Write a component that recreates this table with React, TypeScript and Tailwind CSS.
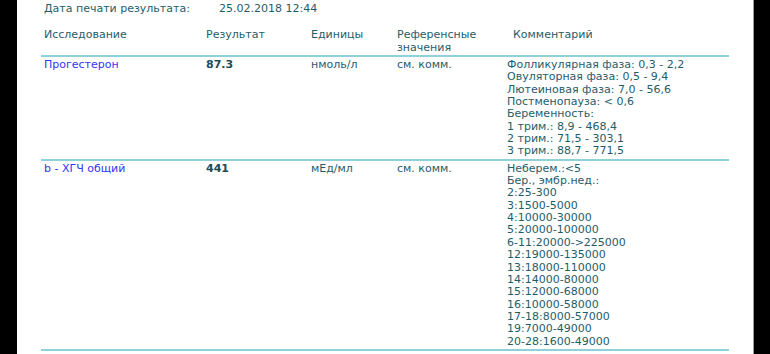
import React from 'react'

const rows = [
  {
    name: 'Прогестерон',
    result: '87.3',
    units: 'нмоль/л',
    ref: 'см. комм.',
    comment: [
      'Фолликулярная фаза: 0,3 - 2,2',
      'Овуляторная фаза: 0,5 - 9,4',
      'Лютеиновая фаза: 7,0 - 56,6',
      'Постменопауза: < 0,6',
      'Беременность:',
      '1 трим.: 8,9 - 468,4',
      '2 трим.: 71,5 - 303,1',
      '3 трим.: 88,7 - 771,5',
    ],
  },
  {
    name: 'b - ХГЧ общий',
    result: '441',
    units: 'мЕд/мл',
    ref: 'см. комм.',
    comment: [
      'Неберем.:<5',
      'Бер., эмбр.нед.:',
      '2:25-300',
      '3:1500-5000',
      '4:10000-30000',
      '5:20000-100000',
      '6-11:20000->225000',
      '12:19000-135000',
      '13:18000-110000',
      '14:14000-80000',
      '15:12000-68000',
      '16:10000-58000',
      '17-18:8000-57000',
      '19:7000-49000',
      '20-28:1600-49000',
    ],
  },
]

const cols = 'grid grid-cols-[162px_105px_86px_110px_1fr]'

export default function App() {
  return (
    <div className="h-[354px] flex bg-black overflow-hidden" style={{ fontFamily: '"DejaVu Sans", Verdana, sans-serif' }}>
      <div className="w-[17px] shrink-0" />
      <div className="flex-1 bg-white pl-[24px] pr-[24px] text-[11px] text-[#1f5d69]">
        {/* Print date */}
        <div className="flex h-[19px] items-center pl-[3px]">
          <span className="w-[175px]">Дата печати результата:</span>
          <span>25.02.2018 12:44</span>
        </div>

        {/* Header */}
        <div className={`${cols} pt-[9px] pb-[1px] leading-[13px] border-b-2 border-[#8fd1d8]`}>
          <div className="pl-[3px]">Исследование</div>
          <div className="pl-[3px]">Результат</div>
          <div className="pl-[3px]">Единицы</div>
          <div className="pl-[3px]">Референсные<br />значения</div>
          <div className="pl-[9px]">Комментарий</div>
        </div>

        {/* Rows */}
        {rows.map((r) => (
          <div key={r.name} className={`${cols} pt-[2px] pb-[1px] leading-[12.35px] border-b-2 border-[#8fd1d8]`}>
            <div className="pl-[3px] text-[#3535f5]">{r.name}</div>
            <div className="pl-[3px] font-bold text-[#1b4c57]">{r.result}</div>
            <div className="pl-[3px]">{r.units}</div>
            <div className="pl-[3px]">{r.ref}</div>
            <div className="pl-[3px]">
              {r.comment.map((c) => (
                <div key={c}>{c}</div>
              ))}
            </div>
          </div>
        ))}
      </div>
      <div className="w-[17px] shrink-0 border-l border-[#9a9a9a]" />
    </div>
  )
}
